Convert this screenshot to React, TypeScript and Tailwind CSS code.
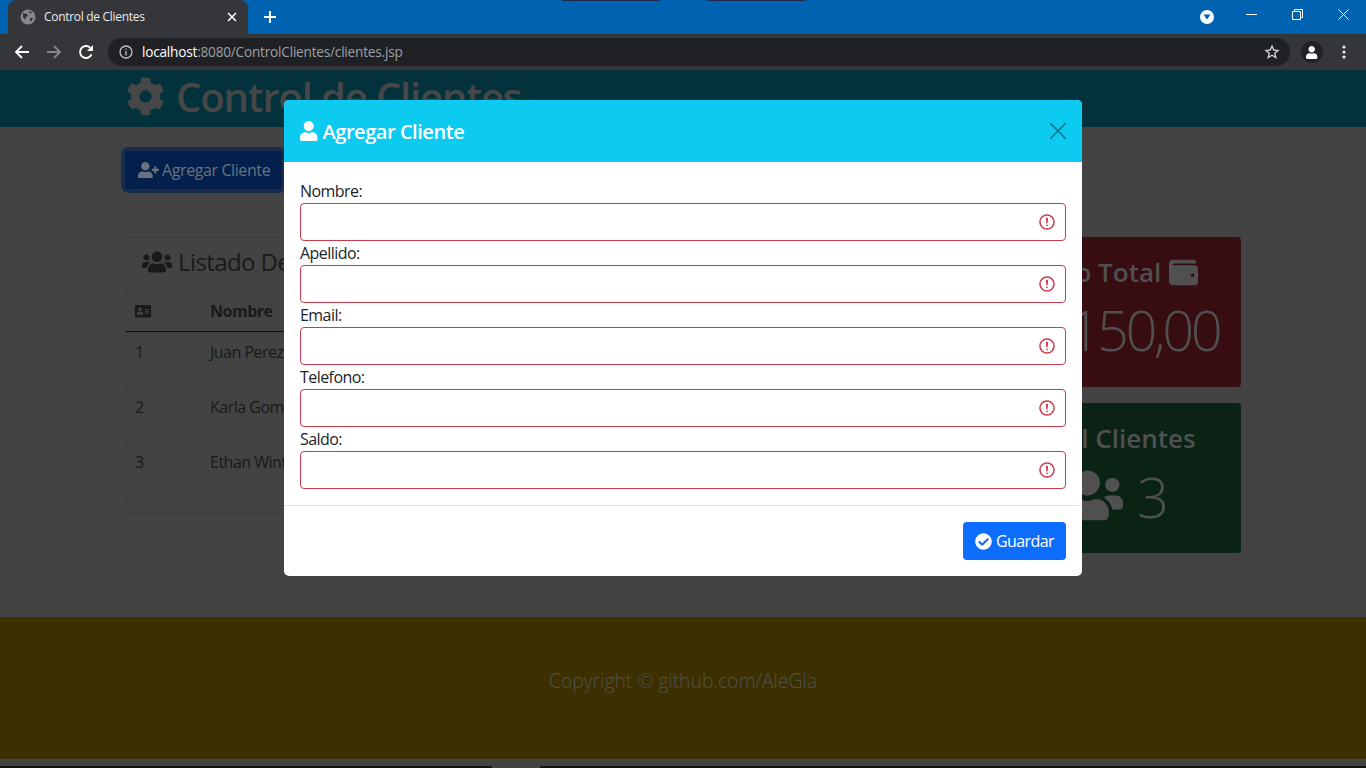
import React from "react";

const F = '[font-family:"Open_Sans","Noto_Sans",sans-serif]';

const Gear = ({ s, c }: { s: number; c: string }) => (
  <svg width={s} height={s} viewBox="0 0 512 512" fill={c}><path d="M487.4 315.7l-42.6-24.6c4.3-23.2 4.3-47 0-70.2l42.6-24.6c4.9-2.8 7.1-8.6 5.5-14-11.1-35.6-30-67.8-54.7-94.6-3.8-4.1-10-5.1-14.8-2.3L380.8 110c-17.9-15.4-38.5-27.3-60.8-35.1V25.8c0-5.6-3.9-10.5-9.4-11.7-36.7-8.2-74.3-7.8-109.2 0-5.5 1.2-9.4 6.1-9.4 11.7V75c-22.2 7.9-42.8 19.8-60.8 35.1L88.7 85.5c-4.9-2.8-11-1.9-14.8 2.3-24.7 26.7-43.6 58.9-54.7 94.6-1.7 5.4.6 11.2 5.5 14L67.3 221c-4.3 23.2-4.3 47 0 70.2l-42.6 24.6c-4.9 2.8-7.1 8.6-5.5 14 11.1 35.6 30 67.8 54.7 94.6 3.8 4.1 10 5.1 14.8 2.3l42.6-24.6c17.9 15.4 38.5 27.3 60.8 35.1v49.2c0 5.6 3.9 10.5 9.4 11.7 36.7 8.2 74.3 7.8 109.2 0 5.5-1.2 9.4-6.1 9.4-11.7v-49.2c22.2-7.9 42.8-19.8 60.8-35.1l42.6 24.6c4.9 2.8 11 1.9 14.8-2.3 24.7-26.7 43.6-58.9 54.7-94.6 1.5-5.5-.7-11.3-5.6-14.1zM256 336c-44.1 0-80-35.9-80-80s35.9-80 80-80 80 35.9 80 80-35.9 80-80 80z"/></svg>
);
const User = ({ s, c }: { s: number; c: string }) => (
  <svg width={s * 0.875} height={s} viewBox="0 0 448 512" fill={c}><path d="M224 256c70.7 0 128-57.3 128-128S294.7 0 224 0 96 57.3 96 128s57.3 128 128 128zm89.6 32h-16.7c-22.2 10.2-46.9 16-72.9 16s-50.6-5.8-72.9-16h-16.7C60.2 288 0 348.2 0 422.4V464c0 26.5 21.5 48 48 48h352c26.5 0 48-21.5 48-48v-41.6c0-74.2-60.2-134.4-134.4-134.4z"/></svg>
);
const UserPlus = ({ s, c }: { s: number; c: string }) => (
  <svg width={s} height={s*0.8} viewBox="0 0 640 512" fill={c}><path d="M624 208h-64v-64c0-8.8-7.2-16-16-16h-32c-8.8 0-16 7.2-16 16v64h-64c-8.8 0-16 7.2-16 16v32c0 8.800 7.200 16 16 16h64v64c0 8.800 7.200 16 16 16h32c8.800 0 16-7.200 16-16v-64h64c8.800 0 16-7.200 16-16v-32c0-8.800-7.200-16-16-16zm-400 48c70.700 0 128-57.300 128-128S294.700 0 224 0 96 57.300 96 128s57.300 128 128 128zm89.600 32h-16.700c-22.200 10.200-46.900 16-72.900 16s-50.600-5.800-72.900-16h-16.700C60.200 288 0 348.200 0 422.400V464c0 26.500 21.500 48 48 48h352c26.500 0 48-21.500 48-48v-41.600c0-74.200-60.200-134.400-134.400-134.400z"/></svg>
);
const Users = ({ s, c }: { s: number; c: string }) => (
  <svg width={s} height={s*0.8} viewBox="0 0 640 512" fill={c}><path d="M96 224c35.300 0 64-28.700 64-64s-28.700-64-64-64-64 28.700-64 64 28.700 64 64 64zm448 0c35.300 0 64-28.700 64-64s-28.700-64-64-64-64 28.700-64 64 28.700 64 64 64zm32 32h-64c-17.600 0-33.500 7.100-45.100 18.600 40.300 22.100 68.900 62 75.100 109.400h66c17.700 0 32-14.300 32-32v-32c0-35.300-28.700-64-64-64zm-256 0c61.900 0 112-50.100 112-112S381.900 32 320 32 208 82.100 208 144s50.100 112 112 112zm76.800 32h-8.300c-20.800 10-43.900 16-68.500 16s-47.600-6-68.500-16h-8.300C179.600 288 128 339.600 128 403.200V432c0 26.500 21.500 48 48 48h288c26.500 0 48-21.500 48-48v-28.800c0-63.600-51.600-115.200-115.200-115.200zm-223.700-13.400C161.500 263.100 145.600 256 128 256H64c-35.300 0-64 28.700-64 64v32c0 17.700 14.300 32 32 32h65.900c6.300-47.400 34.900-87.300 75.200-109.400z"/></svg>
);
const IdCard = ({ s, c }: { s: number; c: string }) => (
  <svg width={s} height={s*0.8} viewBox="0 0 576 512" fill={c}><path d="M528 32H48C21.500 32 0 53.500 0 80v352c0 26.500 21.500 48 48 48h480c26.500 0 48-21.500 48-48V80c0-26.500-21.500-48-48-48zM176 128c35.300 0 64 28.700 64 64s-28.700 64-64 64-64-28.700-64-64 28.700-64 64-64zm112 232c0 13.300-10.700 24-24 24H88c-13.300 0-24-10.700-24-24v-16c0-39.800 32.200-72 72-72h80c39.800 0 72 32.200 72 72v16zm224-32c0 4.400-3.600 8-8 8H360c-4.400 0-8-3.600-8-8v-16c0-4.400 3.600-8 8-8h144c4.400 0 8 3.600 8 8v16zm0-64c0 4.400-3.600 8-8 8H360c-4.400 0-8-3.600-8-8v-16c0-4.400 3.600-8 8-8h144c4.400 0 8 3.600 8 8v16zm0-64c0 4.400-3.600 8-8 8H360c-4.400 0-8-3.600-8-8v-16c0-4.400 3.600-8 8-8h144c4.400 0 8 3.600 8 8v16z"/></svg>
);
const Wallet = ({ s, c }: { s: number; c: string }) => (
  <svg width={s} height={s} viewBox="0 0 512 512" fill={c}><path d="M461.200 128H80c-8.840 0-16-7.160-16-16s7.160-16 16-16h384c8.840 0 16-7.160 16-16 0-26.510-21.490-48-48-48H64C28.650 32 0 60.650 0 96v320c0 35.350 28.650 64 64 64h397.200c28.020 0 50.800-21.530 50.800-48V176c0-26.470-22.780-48-50.800-48zM416 336c-17.670 0-32-14.330-32-32s14.330-32 32-32 32 14.330 32 32-14.330 32-32 32z"/></svg>
);
const CheckCircle = ({ s, c }: { s: number; c: string }) => (
  <svg width={s} height={s} viewBox="0 0 512 512" fill={c}><path d="M504 256c0 136.967-111.033 248-248 248S8 392.967 8 256 119.033 8 256 8s248 111.033 248 248zM227.314 387.314l184-184c6.248-6.248 6.248-16.379 0-22.627l-22.627-22.627c-6.248-6.249-16.379-6.249-22.628 0L216 308.118l-70.059-70.059c-6.248-6.248-16.379-6.248-22.628 0l-22.627 22.627c-6.248 6.248-6.248 16.379 0 22.627l104 104c6.249 6.250 16.379 6.250 22.628.001z"/></svg>
);
const Invalid = () => (
  <svg width="18" height="18" viewBox="0 0 12 12" fill="none" stroke="#d03a4c"><circle cx="6" cy="6" r="4.700"/><path strokeLinejoin="round" d="M5.800 3.600h.4L6 6.500z"/><circle cx="6" cy="8.200" r=".6" fill="#d03a4c" stroke="none"/></svg>
);

function Field({ label }: { label: string }) {
  return (
    <div className="flex flex-col">
      <label className="h-[24px] text-[16px] leading-[24px] tracking-[-0.55px] text-[#212529]">{label}</label>
      <div className="flex h-[38px] items-center justify-end rounded-[4px] border border-[#c93a4e] pr-[9px]">
        <Invalid />
      </div>
    </div>
  );
}

function Row({ n, name }: { n: string; name: string }) {
  return (
    <div className="flex h-[55px] border-b border-[#3d3d3d] pt-[8px] text-[16px] leading-[24px] tracking-[-0.5px] text-[#191a1b]">
      <span className="w-[84px] pl-[9px]">{n}</span>
      <span>{name}</span>
    </div>
  );
}

export default function App() {
  return (
    <div className={`relative flex h-[768px] w-[1366px] flex-col overflow-hidden bg-[#434343] ${F}`}>
      {/* tab strip */}
      <div className="relative flex h-[34px] shrink-0 items-end bg-[#0063b1] pl-[8px]">
        <div className="flex h-[34px] w-[240px] items-center rounded-t-[8px] bg-[#35363a] pl-[12px] pr-[11px]">
          <svg width="16" height="16" viewBox="0 0 16 16"><circle cx="8" cy="8" r="7.500" fill="#85888c"/><path d="M3 4l4 1 1 2-2 1-1 3-2-3zM9 2l3 1-2 2zM10 9l3 0-2 4-1-2z" fill="#35363a"/></svg>
          <span className="ml-[8px] flex-1 text-[12px] leading-[16px] tracking-[-0.3px] text-[#e8eaed]">Control de Clientes</span>
          <svg width="10" height="10" viewBox="0 0 10 10" stroke="#fff" strokeWidth="1.600"><path d="M1 1l8 8M9 1l-8 8"/></svg>
        </div>
        <svg className="mb-[10px] ml-[15px]" width="14" height="14" viewBox="0 0 14 14" stroke="#fff" strokeWidth="2"><path d="M7 1v12M1 7h12"/></svg>
        <div className="absolute left-[562px] top-0 h-px w-[98px] bg-[#1a2a50]" />
        <div className="absolute left-[707px] top-0 h-px w-[98px] bg-[#1a2a50]" />
        <div className="ml-auto flex h-full items-start">
          <div className="mr-[15px] mt-[10px] flex h-[14px] w-[14px] items-center justify-center rounded-full bg-white">
            <svg width="8" height="6" viewBox="0 0 8 6"><path d="M0.500 0.500h7L4 5.500z" fill="#0063b1"/></svg>
          </div>
          <div className="flex h-[28px] w-[45px] items-center justify-center">
            <svg width="11" height="11" viewBox="0 0 11 11" stroke="#fff"><path d="M0 5.500h11"/></svg>
          </div>
          <div className="flex h-[28px] w-[46px] items-center justify-center">
            <svg width="11" height="11" viewBox="0 0 11 11" fill="none" stroke="#fff"><path d="M.5 2.500h8v8h-8zM2.500 2.500v-2h8v8h-2"/></svg>
          </div>
          <div className="flex h-[28px] w-[46px] items-center justify-center">
            <svg width="11" height="11" viewBox="0 0 11 11" stroke="#fff"><path d="M.5.500l10 10M10.500.500l-10 10"/></svg>
          </div>
        </div>
      </div>
      {/* toolbar */}
      <div className="flex h-[36px] shrink-0 items-center bg-[#35363a] pl-[14px]">
        <svg width="16" height="16" viewBox="0 0 16 16" fill="none" stroke="#fff" strokeWidth="1.800"><path d="M15 8H2M8 2L2 8l6 6"/></svg>
        <svg className="ml-[16px]" width="16" height="16" viewBox="0 0 16 16" fill="none" stroke="#84878b" strokeWidth="1.800"><path d="M1 8h13M8 2l6 6-6 6"/></svg>
        <svg className="ml-[16px]" width="16" height="16" viewBox="0 0 16 16" fill="none"><path d="M13.500 10.500A6 6 0 1 1 12.200 3.700" stroke="#fff" strokeWidth="1.900"/><path d="M15 1v6H9z" fill="#fff"/></svg>
        <div className="ml-[14px] flex h-[28px] w-[1182px] items-center rounded-full bg-[#202124] px-[10px]">
          <svg width="16" height="16" viewBox="0 0 16 16" fill="none" stroke="#c0c2c5" strokeWidth="1.300"><circle cx="8" cy="8" r="6"/><path d="M8 7v4.500M8 4.500v1.300"/></svg>
          <span className="ml-[8px] flex-1 text-[13.6px] tracking-[-0.2px]"><span className="text-white">localhost</span><span className="text-[#9aa0a6]">:8080/ControlClientes/clientes.jsp</span></span>
          <svg width="16" height="16" viewBox="0 0 24 24" fill="none" stroke="#d0d2d5" strokeWidth="2"><path d="M12 3l2.700 6 6.300.6-4.800 4.200 1.500 6.500L12 16.800 6.300 20.300l1.500-6.500L3 9.600 9.300 9z"/></svg>
        </div>
        <div className="ml-[11px] flex h-[22px] w-[22px] items-center justify-center rounded-full bg-[#202124]">
          <User s={13} c="#fff" />
        </div>
        <svg className="ml-[19px]" width="4" height="14" viewBox="0 0 4 14" fill="#e8eaed"><circle cx="2" cy="2" r="1.600"/><circle cx="2" cy="7" r="1.600"/><circle cx="2" cy="12" r="1.600"/></svg>
      </div>

      {/* page */}
      <header className="flex h-[57px] shrink-0 items-center gap-[11px] bg-[#03323c] pb-[4px] pl-[126px]">
        <Gear s={39} c="#474747" />
        <h1 className="text-[40px] font-semibold leading-[48px] tracking-[-1.15px] text-[#474747]">Control de Clientes</h1>
      </header>
      <section className="flex h-[84px] shrink-0 items-center border-b border-[#414141] pl-[125px] pt-[3px]">
        <button className="flex h-[38px] items-center gap-[3px] rounded-[4px] bg-[#02204b] pl-[13px] pr-[12px] text-[16px] tracking-[-0.4px] text-[#6a7280] shadow-[0_0_0_4px_#182c50]">
          <UserPlus s={21} c="#6a7280" />
          <span>Agregar Cliente</span>
        </button>
      </section>
      <section className="flex h-[406px] shrink-0 gap-[24px] pl-[125px] pt-[26px]">
        <div className="h-[277px] w-[831px] rounded-[4px] border border-[#3b3b3b]">
          <div className="flex h-[53px] items-center gap-[6px] border-b border-[#3d3d3d] pb-[5px] pl-[16px] text-[24px] font-medium tracking-[-0.6px] text-[#191a1b]">
            <Users s={30} c="#191a1b" />
            <span>Listado De Clientes</span>
          </div>
          <div className="flex h-[41px] items-center border-b border-[#0c0c0c] text-[16px] font-bold tracking-[-0.5px] text-[#191a1b]">
            <span className="w-[84px] pl-[8px]"><IdCard s={18} c="#191a1b" /></span>
            <span>Nombre</span>
          </div>
          <Row n="1" name="Juan Perez" />
          <Row n="2" name="Karla Gomez" />
          <Row n="3" name="Ethan Winters" />
        </div>
        <div className="flex w-[261px] flex-col gap-[16px]">
          <div className="flex h-[150px] flex-col items-center rounded-[4px] bg-[#370d11] pt-[15px]">
            <div className="flex items-center gap-[8px] text-[26px] font-semibold leading-[40px] text-[#505050]">
              <span>Saldo Total</span>
              <Wallet s={29} c="#505050" />
            </div>
            <div className="mt-[3px] text-[56px] font-light leading-[68px] tracking-[-3.5px] text-[#505050]">$1.150,00</div>
          </div>
          <div className="flex h-[150px] flex-col items-center rounded-[4px] bg-[#0a2315] pt-[15px]">
            <div className="text-[26px] font-semibold leading-[40px] text-[#505050]">Total Clientes</div>
            <div className="mt-[2px] flex items-center gap-[14px] text-[56px] font-light leading-[68px] text-[#505050]">
              <Users s={71} c="#505050" />
              <span className="mt-[2px]">3</span>
            </div>
          </div>
        </div>
      </section>
      <footer className="flex h-[142px] shrink-0 items-center justify-center bg-[#3d3000] pb-[14px] text-[19.3px] font-light text-[#505050]">
        Copyright © github.com/AleGla
      </footer>
      <div className="h-[7px] shrink-0 bg-[#434343]" />
      <div className="relative h-[2px] shrink-0 bg-[#121212]">
        <div className="absolute left-[492px] top-0 h-[2px] w-[48px] bg-[#434343]" />
      </div>

      {/* modal */}
      <div className="absolute left-[284px] top-[100px] w-[798px] overflow-hidden rounded-[5px] bg-white">
        <div className="flex h-[62px] items-center justify-between bg-[#0dcaf0] px-[16px]">
          <div className="flex items-center gap-[5px] text-[20px] font-semibold leading-[30px] tracking-[-0.45px] text-white">
            <User s={20} c="#fff" />
            <span className="mt-[1px]">Agregar Cliente</span>
          </div>
          <svg width="16" height="16" viewBox="0 0 16 16" stroke="#0a6f86" strokeWidth="1.500"><path d="M0 0l16 16M16 0L0 16"/></svg>
        </div>
        <div className="flex flex-col px-[16px] pb-[16px] pt-[17px]">
          <Field label="Nombre:" />
          <Field label="Apellido:" />
          <Field label="Email:" />
          <Field label="Telefono:" />
          <Field label="Saldo:" />
        </div>
        <div className="flex h-[71px] items-start justify-end border-t border-[#dee2e6] pr-[16px] pt-[16px]">
          <button className="flex h-[38px] w-[103px] items-center justify-center gap-[4px] rounded-[4px] bg-[#0d6efd] text-[16px] tracking-[-0.6px] text-white">
            <CheckCircle s={17} c="#fff" />
            <span>Guardar</span>
          </button>
        </div>
      </div>
    </div>
  );
}
